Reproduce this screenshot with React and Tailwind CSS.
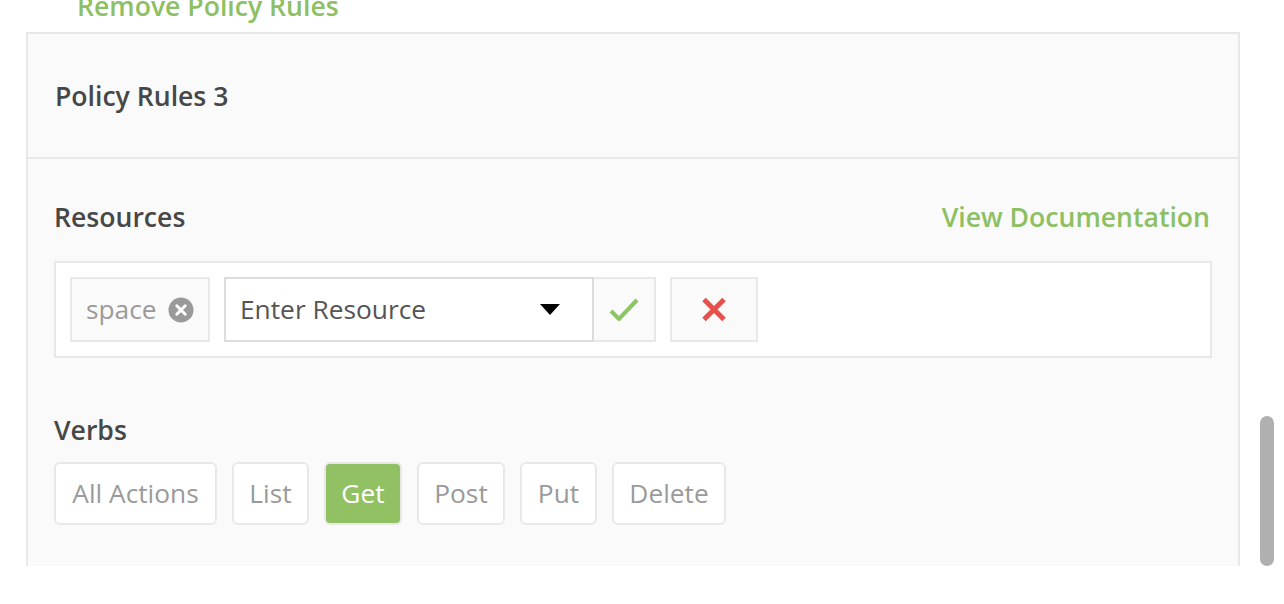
import React from "react";

const verbs = [
    { label: "All Actions", width: "w-[163px]" },
    { label: "List", width: "w-[77px]" },
    { label: "Get", width: "w-[78px]" },
    { label: "Post", width: "w-[88px]" },
    { label: "Put", width: "w-[77px]" },
    { label: "Delete", width: "w-[114px]" },
];

const VerbButton = ({ label, width, active }) => (
    <button
        className={
            active
                ? `${width} h-[63px] rounded-[6px] border-2 border-[#e8e8e8] bg-[#92c164] text-center text-[26.3px] text-white`
                : `${width} h-[63px] rounded-[6px] border-2 border-[#e8e8e8] bg-white text-center text-[26.3px] text-[#9a9a9a]`
        }
    >
        {label}
    </button>
);

export default function App() {
    return (
        <div className="h-[604px] w-[1284px] overflow-hidden bg-white font-['Open_Sans',sans-serif]">
            <div className="relative h-[566px] overflow-hidden">
                {/* heading of the previous block, scrolled mostly out of view */}
                <div className="-mt-[12px] h-[36px] pl-[77px] text-[26.6px] font-semibold leading-[36px] text-[#8cc063]">
                    Remove Policy Rules
                </div>

                <div className="mt-[8px] mr-[44px] ml-[26px] border-2 border-b-0 border-[#e8e8e8] bg-[#fafafa] pb-20">
                    <div className="flex h-[125px] items-center border-b-2 border-[#e8e8e8] px-[27px] pt-[3px]">
                        <h2 className="text-[26.6px] font-semibold text-[#474747]">Policy Rules 3</h2>
                    </div>

                    <div className="px-[26px] pt-[41px]">
                        <div className="flex h-[36px] items-center justify-between">
                            <h3 className="text-[26.6px] font-semibold text-[#474747]">Resources</h3>
                            <a className="pr-[2px] text-[26.6px] font-semibold text-[#8cc063]">View Documentation</a>
                        </div>

                        <div className="mt-[25px] flex gap-[14px] border-2 border-[#e8e8e8] bg-white p-[14px]">
                            <div className="flex h-[65px] w-[140px] items-center justify-between border-2 border-[#e8e8e8] bg-[#fafafa] pr-[14px] pl-[14px]">
                                <span className="text-[26.3px] text-[#9a9a9a]">space</span>
                                <svg width="26" height="26" viewBox="0 0 26 26">
                                    <circle cx="13" cy="13" r="12.5" fill="#9a9a9a" />
                                    <path d="M8.8 8.8 L17.2 17.2 M17.2 8.8 L8.8 17.2" stroke="#fff" strokeWidth="3" strokeLinecap="round" />
                                </svg>
                            </div>

                            <div className="flex">
                                <div className="flex h-[65px] w-[370px] items-center justify-between border-2 border-[#dcdcdc] bg-white pr-[32px] pl-[14px]">
                                    <span className="text-[26.3px] text-[#555]">Enter Resource</span>
                                    <svg width="20" height="11" viewBox="0 0 20 11">
                                        <path d="M0 0 L20 0 L10 11 Z" fill="#000" />
                                    </svg>
                                </div>
                                <div className="flex h-[65px] w-[62px] items-center justify-center border-2 border-l-0 border-[#e8e8e8] bg-[#fafafa]">
                                    <svg width="30" height="23" viewBox="0 0 30 23">
                                        <path d="M2 13 L10 21 L28 2" fill="none" stroke="#8dc466" strokeWidth="4" />
                                    </svg>
                                </div>
                            </div>

                            <div className="flex h-[65px] w-[88px] items-center justify-center border-2 border-[#e8e8e8] bg-[#fafafa]">
                                <svg width="26" height="25" viewBox="0 0 26 25">
                                    <path d="M3 2.5 L23 22.5 M23 2.5 L3 22.5" stroke="#e5524b" strokeWidth="5" />
                                </svg>
                            </div>
                        </div>

                        <h3 className="mt-[54px] text-[26.6px] leading-[36px] font-semibold text-[#474747]">Verbs</h3>
                        <div className="mt-[14px] flex gap-[15px]">
                            {verbs.map((v) => (
                                <VerbButton key={v.label} label={v.label} width={v.width} active={v.label === "Get"} />
                            ))}
                        </div>
                    </div>
                </div>

                <div className="absolute top-[416px] left-[1260px] h-[150px] w-[14px] rounded-full bg-[#b0b0b0]" />
            </div>
        </div>
    );
}
